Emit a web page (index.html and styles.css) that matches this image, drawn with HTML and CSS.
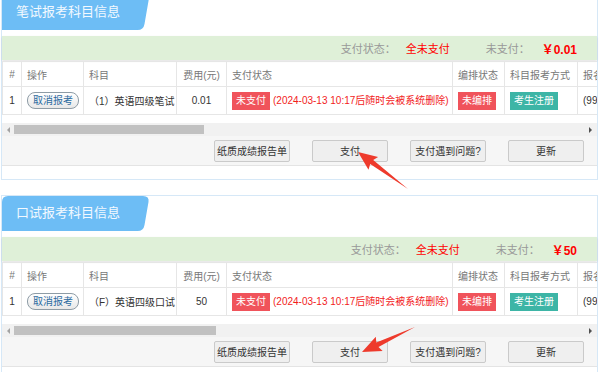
FILE: index.html
```html
<!DOCTYPE html>
<html lang="zh-CN">
<head>
    <meta charset="UTF-8">
    <title>报考科目信息</title>
    <link rel="stylesheet" href="styles.css">
</head>
<body>

    <div class="page">
        <!-- 笔试 -->
        <div class="panel">
            <div class="tab">笔试报考科目信息</div>
            <div class="summary">
                <span class="label">支付状态：</span>
                <span class="status">全未支付</span>
                <span class="label">未支付：</span>
                <span class="amount">￥0.01</span>
            </div>
            <div class="table-wrap">
                <table class="grid">
                    <colgroup>
                        <col style="width:19px"><col style="width:62px"><col style="width:93px"><col style="width:50px">
                        <col style="width:226px"><col style="width:52px"><col style="width:73px"><col style="width:90px">
                    </colgroup>
                    <thead>
                        <tr>
                            <th class="center">#</th>
                            <th>操作</th>
                            <th>科目</th>
                            <th class="center">费用(元)</th>
                            <th>支付状态</th>
                            <th>编排状态</th>
                            <th>科目报考方式</th>
                            <th>报名时间</th>
                        </tr>
                    </thead>
                    <tbody>
                        <tr>
                            <td class="center">1</td>
                            <td><span class="cancel">取消报考</span></td>
                            <td>（1）英语四级笔试</td>
                            <td class="center">0.01</td>
                            <td><span class="badge red">未支付</span><span class="note">(2024-03-13 10:17后随时会被系统删除)</span></td>
                            <td><span class="badge red">未编排</span></td>
                            <td><span class="badge teal">考生注册</span></td>
                            <td>(999-03-01)</td>
                        </tr>
                    </tbody>
                </table>
            </div>
            <div class="scrollbar">
                <span class="arrow left"></span>
                <span class="track"><span class="thumb" style="width:190px"></span></span>
                <span class="arrow right"></span>
            </div>
            <div class="actions">
                <button>纸质成绩报告单</button>
                <button>支付</button>
                <button>支付遇到问题?</button>
                <button>更新</button>
            </div>
        </div>

        <!-- 口试 -->
        <div class="panel">
            <div class="tab">口试报考科目信息</div>
            <div class="summary">
                <span class="label">支付状态：</span>
                <span class="status">全未支付</span>
                <span class="label">未支付：</span>
                <span class="amount">￥50</span>
            </div>
            <div class="table-wrap">
                <table class="grid">
                    <colgroup>
                        <col style="width:19px"><col style="width:62px"><col style="width:93px"><col style="width:50px">
                        <col style="width:226px"><col style="width:52px"><col style="width:73px"><col style="width:90px">
                    </colgroup>
                    <thead>
                        <tr>
                            <th class="center">#</th>
                            <th>操作</th>
                            <th>科目</th>
                            <th class="center">费用(元)</th>
                            <th>支付状态</th>
                            <th>编排状态</th>
                            <th>科目报考方式</th>
                            <th>报名时间</th>
                        </tr>
                    </thead>
                    <tbody>
                        <tr>
                            <td class="center">1</td>
                            <td><span class="cancel">取消报考</span></td>
                            <td>（F）英语四级口试</td>
                            <td class="center">50</td>
                            <td><span class="badge red">未支付</span><span class="note">(2024-03-13 10:17后随时会被系统删除)</span></td>
                            <td><span class="badge red">未编排</span></td>
                            <td><span class="badge teal">考生注册</span></td>
                            <td>(999-03-01)</td>
                        </tr>
                    </tbody>
                </table>
            </div>
            <div class="scrollbar">
                <span class="arrow left"></span>
                <span class="track"><span class="thumb" style="width:202px"></span></span>
                <span class="arrow right"></span>
            </div>
            <div class="actions">
                <button>纸质成绩报告单</button>
                <button>支付</button>
                <button>支付遇到问题?</button>
                <button>更新</button>
            </div>
        </div>
    </div>

    <!-- red arrows drawn over the screenshot -->
    <svg class="arrows" width="599" height="372" viewBox="0 0 599 372">
        <polygon points="358,152 378.1,156.9 373.2,160.1 408,189 370.2,164.1 368.5,169.7" />
        <polygon points="362,352 382.6,351.1 378.5,347.1 415,327 376.3,342.5 375.8,336.7" />
    </svg>

</body>
</html>
```

FILE: styles.css
```css
body {
    margin: 0;
    background-color: #fff;
    color: #333;
    font-family: "Liberation Sans", "Noto Sans CJK SC", sans-serif;
}

.page {
    margin-top: -6px;
}

/* Panel */
.panel {
    width: 597px;
    margin: 0 0 15px 1px;
    box-sizing: border-box;
    border: 1px solid #d6e8f7;
}

.tab {
    width: 148px;
    height: 35px;
    box-sizing: border-box;
    padding-left: 14px;
    background-color: #6dbdf5;
    color: #f2f9ff;
    font-size: 13px;
    line-height: 33px;
    clip-path: path('M0 35 L0 6 Q0 0 6 0 L141 0 Q147.5 0 146.5 6 L142.5 29 Q141.5 35 135.5 35 Z');
}

/* Summary bar */
.summary {
    display: flex;
    justify-content: flex-end;
    align-items: center;
    height: 24px;
    margin-top: 6px;
    padding-right: 20px;
    background-color: #dff0d8;
    box-shadow: 0px 1px 2px rgba(0, 0, 0, 0.12);
    font-size: 11px;
}

.summary .label {
    color: #999;
}

.summary .status {
    color: #f00;
    margin: 0 36px 0 10px;
}

.summary .amount {
    color: #f00;
    font-weight: bold;
    font-size: 12px;
    margin-left: 12px;
}

/* Table */
.table-wrap {
    overflow: hidden;
    margin-top: 1px;
}

.grid {
    border-collapse: collapse;
    table-layout: fixed;
    width: 665px;
    font-size: 10px;
}

.grid th, .grid td {
    border: 1px solid #e6e6e6;
    padding: 0 5px;
    text-align: left;
    white-space: nowrap;
    overflow: hidden;
}

.grid th {
    height: 24px;
    color: #777;
    font-weight: normal;
}

.grid td {
    height: 27px;
}

.grid .center {
    text-align: center;
}

.cancel {
    display: inline-block;
    height: 15px;
    padding: 0 5px;
    border: 1px solid #8e9ca6;
    border-radius: 8px;
    background: linear-gradient(#fff, #e8e8e8);
    color: #2b6aa0;
    line-height: 15px;
}

.badge {
    display: inline-block;
    height: 18px;
    padding: 0 4px;
    color: #fff;
    line-height: 18px;
}

.badge.red {
    background-color: #f0535b;
}

.badge.teal {
    background-color: #3db5a6;
}

.note {
    color: #f21c1c;
    margin-left: 3px;
}

/* Fake horizontal scrollbar */
.scrollbar {
    display: flex;
    align-items: center;
    height: 13px;
    margin-top: 8px;
    background-color: #f1f1f1;
}

.arrow {
    width: 12px;
    height: 13px;
    position: relative;
}

.arrow::after {
    content: "";
    position: absolute;
    top: 4px;
    border-top: 3px solid transparent;
    border-bottom: 3px solid transparent;
}

.arrow.left::after {
    left: 5px;
    border-right: 3px solid #a3a3a3;
}

.arrow.right::after {
    left: 4px;
    border-left: 3px solid #505050;
}

.track {
    flex: 1;
    display: flex;
    align-items: center;
    height: 100%;
}

.thumb {
    height: 9px;
    background-color: #c1c1c1;
}

/* Buttons */
.actions {
    display: flex;
    justify-content: flex-end;
    align-items: center;
    gap: 22px;
    height: 30px;
    box-sizing: border-box;
    margin-bottom: 13px;
    padding-right: 13px;
    background-color: #f6f6f6;
    border-bottom: 1px solid #e4e4e4;
}

.actions button {
    width: 76px;
    height: 22px;
    padding: 0;
    background-color: #efefef;
    border: 1px solid #cacaca;
    border-radius: 2px;
    color: #333;
    font-family: inherit;
    font-size: 10px;
}

.arrows {
    position: absolute;
    top: 0;
    left: 0;
    pointer-events: none;
}

.arrows polygon {
    fill: #ee3a2c;
}
```
